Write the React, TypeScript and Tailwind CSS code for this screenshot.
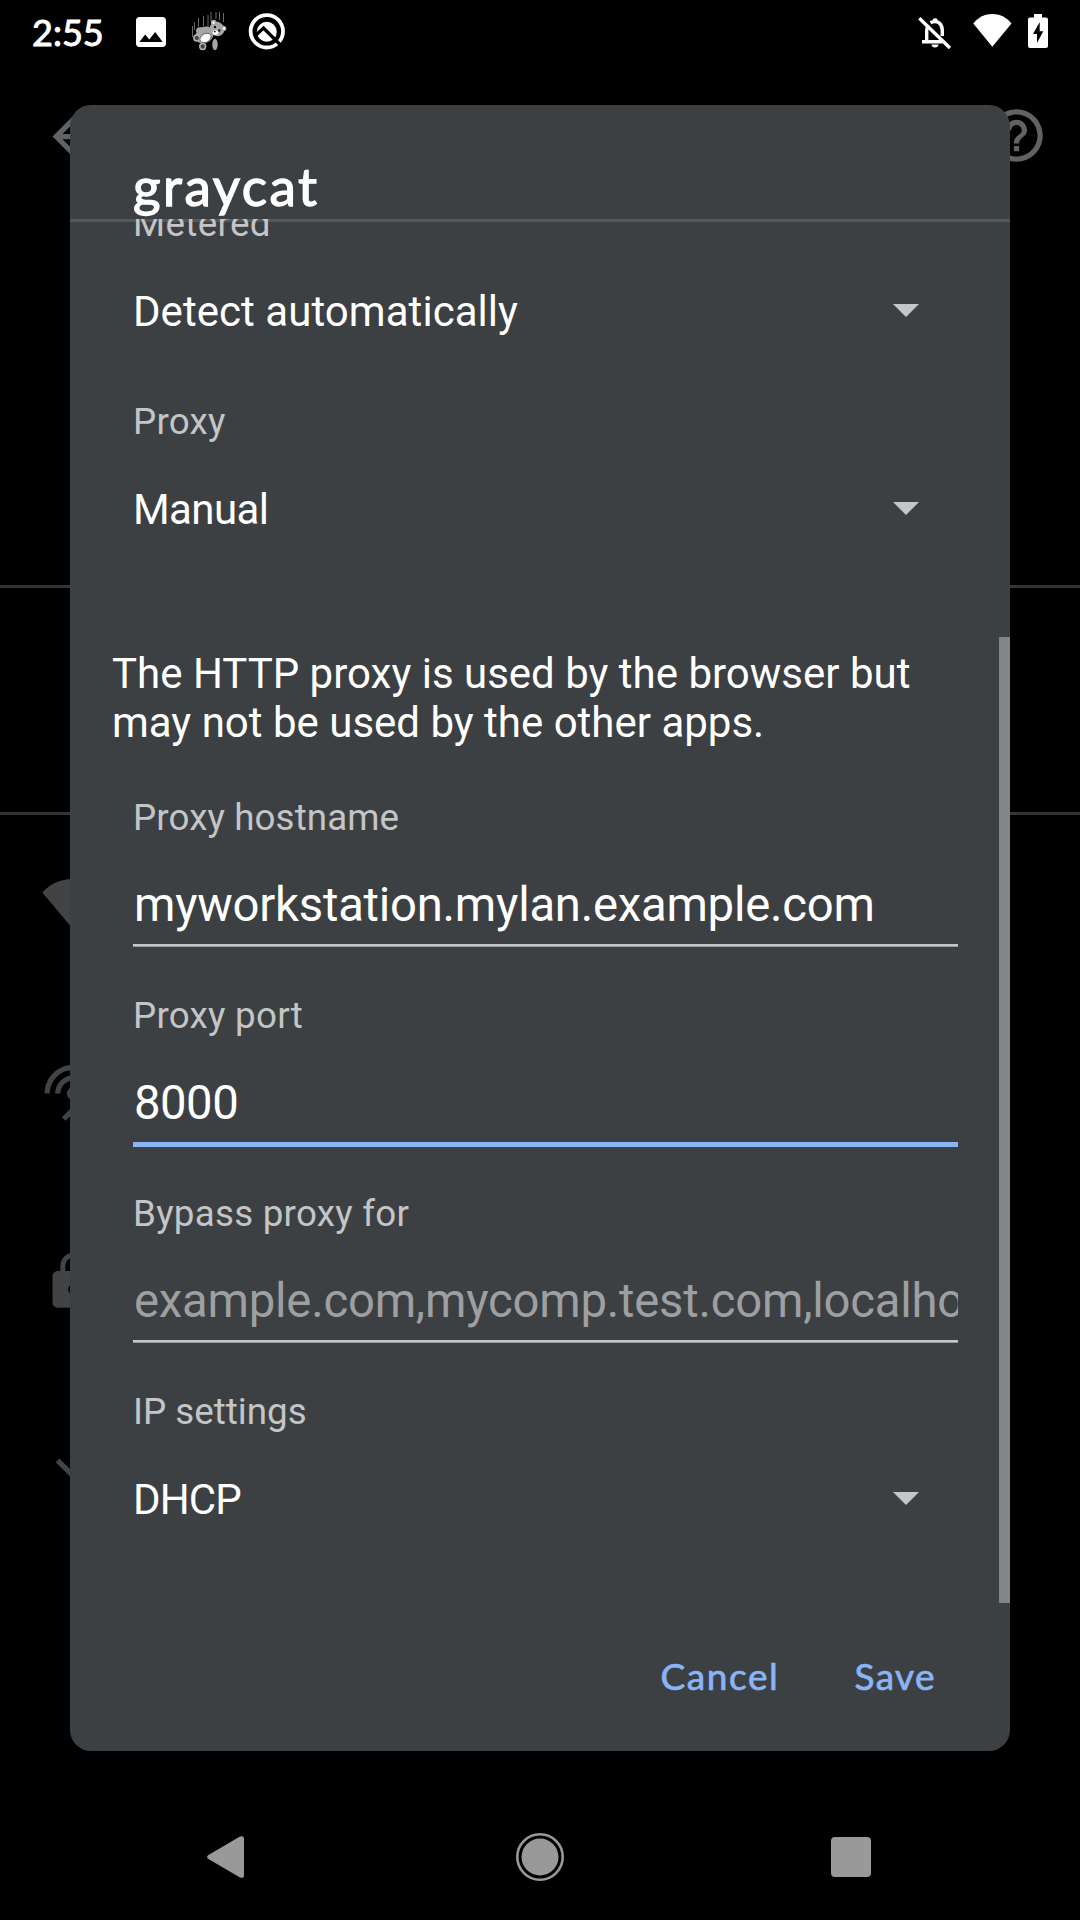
import type { ReactNode } from "react";

const BACK = "M20 11H7.83l5.59-5.59L12 4l-8 8 8 8 1.41-1.41L7.83 13H20v-2z";
const HELP =
  "M11 18h2v-2h-2v2zm1-16C6.48 2 2 6.48 2 12s4.48 10 10 10 10-4.48 10-10S17.52 2 12 2zm0 18c-4.41 0-8-3.59-8-8s3.59-8 8-8 8 3.59 8 8-3.59 8-8 8zm0-14c-2.21 0-4 1.79-4 4h2c0-1.1.9-2 2-2s2 .9 2 2c0 2-3 1.75-3 5h2c0-2.25 3-2.5 3-5 0-2.21-1.79-4-4-4z";
const WIFI = "M12 21.9L.5 8.2C3.4 4.9 7.5 3 12 3s8.600 1.900 11.500 5.200L12 21.900z";
const ANTENNA =
  "M12 5c-3.87 0-7 3.13-7 7h2c0-2.76 2.24-5 5-5s5 2.24 5 5h2c0-3.87-3.13-7-7-7zm1 9.29c.88-.39 1.5-1.26 1.5-2.29 0-1.38-1.12-2.5-2.5-2.5S9.500 10.620 9.500 12c0 1.020.620 1.900 1.500 2.290v3.300L7.590 21 9 22.410l3-3 3 3L16.410 21 13 17.590v-3.300zM12 1C5.930 1 1 5.930 1 12h2c0-4.970 4.030-9 9-9s9 4.030 9 9h2c0-6.070-4.930-11-11-11z";
const LOCK =
  "M18 8h-1V6c0-2.76-2.24-5-5-5S7 3.240 7 6v2H6c-1.100 0-2 .900-2 2v10c0 1.100.900 2 2 2h12c1.100 0 2-.900 2-2V10c0-1.100-.900-2-2-2zm-6 9c-1.100 0-2-.900-2-2s.900-2 2-2 2 .900 2 2-.900 2-2 2zm3.100-9H8.900V6c0-1.710 1.390-3.100 3.100-3.100s3.100 1.390 3.100 3.100v2z";
const EXPAND = "M16.590 8.590L12 13.170 7.410 8.590 6 10l6 6 6-6z";

function Glyph({ d, className }: { d: string; className: string }) {
  return (
    <svg viewBox="0 0 24 24" className={className} fill="currentColor">
      <path d={d} />
    </svg>
  );
}

function Bear() {
  return (
    <svg viewBox="0 0 40 42" className="ml-[19px] mt-[10px] h-[42px] w-[40px]">
      <g stroke="#6a6a6a" strokeWidth="1">
        <path d="M2.500 16v11M4.500 12v8M8.500 8v9M13.500 6v10M18 5v12M21 2v9M26 2v7M29.500 2v8M33.500 3v9" />
      </g>
      <g fill="#a6a6a6">
        <ellipse cx="14.500" cy="25" rx="9.500" ry="8" transform="rotate(-35 14.500 25)" />
        <ellipse cx="25" cy="34.500" rx="2.700" ry="5.800" />
        <ellipse cx="10.500" cy="20.500" rx="4.500" ry="3.200" />
        <circle cx="23.700" cy="12.500" r="2.800" />
        <circle cx="33.500" cy="18.500" r="2.800" />
        <ellipse cx="27" cy="19" rx="7.600" ry="7" transform="rotate(30 27 19)" />
      </g>
      <g fill="#444" stroke="#b5b5b5" strokeWidth="1.500">
        <circle cx="6.800" cy="28" r="2.900" />
        <circle cx="12.700" cy="36.500" r="2.900" />
      </g>
      <ellipse cx="15.500" cy="28" rx="6" ry="4.200" fill="#fff" stroke="#222" strokeWidth=".6" transform="rotate(-30 15.500 28)" />
      <ellipse cx="25.500" cy="22.500" rx="2.800" ry="2.300" fill="#fff" />
      <g fill="#111">
        <circle cx="25" cy="17" r="1.200" />
        <circle cx="29.200" cy="20.500" r="1.200" />
        <circle cx="24.800" cy="21.600" r=".9" />
      </g>
      <circle cx="23.500" cy="12.700" r="1.200" fill="#fff" />
      <circle cx="34" cy="18.500" r="1.200" fill="#fff" />
    </svg>
  );
}

function StatusBar() {
  return (
    <div className="flex h-[63px] items-start text-white">
      <div className="ml-[32px] mt-[10px] w-[72px] whitespace-nowrap font-['Lato'] text-[36px] font-normal leading-[44px] [-webkit-text-stroke:1px_#fff]">
        2:55
      </div>
      <Glyph
        className="ml-[27px] mt-[12px] size-[40px]"
        d="M21 19V5c0-1.100-.900-2-2-2H5c-1.100 0-2 .900-2 2v14c0 1.100.900 2 2 2h14c1.100 0 2-.900 2-2zM8.500 13.500l2.500 3.010L14.500 12l4.500 6H5l3.500-4.500z"
      />
      <Bear />
      <svg viewBox="0 0 40 40" className="ml-[17px] mt-[11px] size-[40px]">
        <circle cx="19.800" cy="20.300" r="16.200" fill="none" stroke="#fff" strokeWidth="3.800" />
        <circle cx="19.800" cy="20.800" r="10" fill="#fff" />
        <path d="M8.500 24.500L16.500 17L36 36.500" fill="none" stroke="#000" strokeWidth="3.300" />
      </svg>
      <div className="grow" />
      <svg viewBox="0 0 36 36" className="mt-[15px] size-[36px]" fill="none" stroke="#fff" strokeWidth="3.400">
        <path d="M5 26.700h20.500M9.700 26V15.500c0-2 .8-4 2-5.400M13.500 7.800C20 4 25.300 9 25.300 15v6" />
        <path d="M2.300 3.300L33 33" />
        <path d="M15.300 5.500a2.900 2.900 0 0 1 5.700 0zM14.500 29.500h7c0 4-7 4-7 0z" fill="#fff" stroke="none" />
      </svg>
      <svg viewBox="0 0 39 33" className="ml-[20px] mt-[14px] h-[33px] w-[39px]" fill="#fff">
        <path d="M19.300 32.700L.3 9.500C5.500 3 12 0 19.300 0s14 3 19.200 9.500z" />
      </svg>
      <svg viewBox="0 0 20 34" className="ml-[16px] mr-[32px] mt-[14px] h-[34px] w-[20px]">
        <path d="M6 0h8v3.500h4a2 2 0 0 1 2 2V32a2 2 0 0 1-2 2H2a2 2 0 0 1-2-2V5.500a2 2 0 0 1 2-2h4z" fill="#fff" />
        <path d="M11.700 8L5 20h4v9l6.300-11.700h-3.600z" fill="#000" />
      </svg>
    </div>
  );
}

function SettingsBackdrop() {
  return (
    <div className="flex grow flex-col">
      <div className="flex h-[522px] items-start justify-between pl-[42px] pr-[32px] pt-[41px] text-[#626262]">
        <Glyph d={BACK} className="mt-px size-[63px]" />
        <Glyph d={HELP} className="size-[63px]" />
      </div>
      <div className="h-[230px] border-y-[3px] border-[#333]" />
      <div className="flex flex-col pl-[41px] text-[#434343]">
        <Glyph d={WIFI} className="mt-[56px] size-[63px]" />
        <Glyph d={ANTENNA} className="ml-px mt-[128px] size-[63px]" />
        <Glyph d={LOCK} className="ml-px mt-[125px] size-[63px]" />
        <Glyph d={EXPAND} className="-ml-px mt-[123px] size-[63px]" />
      </div>
    </div>
  );
}

type FieldProps = { label: string; labelClass?: string; children: ReactNode };

function Field({ label, labelClass = "tracking-[0.25px]", children }: FieldProps) {
  return (
    <div className="flex h-[198px] flex-col pl-[63px] pr-[52px]">
      <div className={"text-[36.75px] leading-[43px] text-[#c4c5c6] " + labelClass}>{label}</div>
      {children}
    </div>
  );
}

type SelectProps = { label: string; value: string; labelClass?: string; valueClass?: string };

function Select({ label, value, labelClass, valueClass = "" }: SelectProps) {
  return (
    <Field label={label} labelClass={labelClass}>
      <div className="mt-[42px] flex h-[49px] items-start justify-between pr-[39px]">
        <span className={"text-[42px] leading-[49px] " + valueClass}>{value}</span>
        <svg viewBox="0 0 26 13" className="mt-[17px] h-[13px] w-[26px]" fill="#c5c6c7">
          <path d="M0 0h26L13 13z" />
        </svg>
      </div>
    </Field>
  );
}

type InputProps = SelectProps & { focused?: boolean };

function Input({ label, value, labelClass, valueClass = "", focused }: InputProps) {
  return (
    <Field label={label} labelClass={labelClass}>
      <div className={"mt-[39px] h-[55px] overflow-hidden whitespace-nowrap pl-px text-[47.25px] leading-[55px] " + valueClass}>
        {value}
      </div>
      {focused ? (
        <div className="mt-[11px] h-[5px] shrink-0 bg-[#8ab4f8]" />
      ) : (
        <div className="mt-[11px] h-[3px] shrink-0 border-b border-[#9a9c9d] bg-[#c5c6c7]" />
      )}
    </Field>
  );
}

function NetworkDialog() {
  return (
    <div className="absolute left-[70px] top-[105px] flex h-[1646px] w-[940px] flex-col overflow-hidden rounded-[21px] bg-[#3c4043] text-white">
      <h1 className="h-[114px] shrink-0 pl-[63px] pt-[49px] font-['Lato'] text-[53px] font-normal leading-[64px] tracking-[2.5px] [-webkit-text-stroke:1.3px_#fff]">
        graycat
      </h1>
      <div className="-mb-[3px] h-[3px] shrink-0 bg-[#54585b]" />
      <div className="relative h-[1384px] shrink-0 overflow-hidden">
        <div className="-mt-[17px]">
          <Select label="Metered" value="Detect automatically" labelClass="tracking-[0.35px]" valueClass="tracking-[0.05px]" />
          <Select label="Proxy" value="Manual" valueClass="tracking-[-0.6px]" />
          <p className="h-[198px] pl-[42px] pr-[60px] pt-[51px] text-[42px] leading-[49px]">
            The HTTP proxy is used by the browser but
            <br />
            may not be used by the other apps.
          </p>
          <Input
            label="Proxy hostname"
            labelClass="tracking-[0.1px]"
            value="myworkstation.mylan.example.com"
            valueClass="text-white tracking-[-0.24px]"
          />
          <Input label="Proxy port" value="8000" valueClass="text-white tracking-[-0.5px]" focused />
          <Input
            label="Bypass proxy for"
            value="example.com,mycomp.test.com,localhost"
            valueClass="text-[#9e9fa1] tracking-[-0.22px]"
          />
          <Select label="IP settings" labelClass="tracking-normal" value="DHCP" valueClass="tracking-[-0.9px]" />
        </div>
        <div className="absolute bottom-0 right-0 h-[966px] w-[11px] bg-[#828689]" />
      </div>
      <div className="flex justify-end gap-[75px] pr-[74px] pt-[50px] font-['Lato'] text-[37px] font-normal leading-[46px] text-[#8ab4f8] [-webkit-text-stroke:0.7px_#8ab4f8]">
        <span className="tracking-[1.6px]">Cancel</span>
        <span className="tracking-[1.4px]">Save</span>
      </div>
    </div>
  );
}

function NavBar() {
  return (
    <div className="flex h-[126px] items-center pl-[207px] pr-[209px]">
      <svg viewBox="0 0 37 42" className="h-[42px] w-[37px]" fill="#999">
        <path d="M1 19.200L33 .6Q37-1 37 3v36q0 4-4 2.400L1 22.800q-1.800-1.800 0-3.600z" />
      </svg>
      <svg viewBox="0 0 48 48" className="ml-[272px] size-[48px]">
        <circle cx="24" cy="24" r="22.700" fill="none" stroke="#999" strokeWidth="2.600" />
        <circle cx="24" cy="24" r="18.500" fill="#999" />
      </svg>
      <div className="ml-auto size-[40px] rounded-[4px] bg-[#999]" />
    </div>
  );
}

export default function App() {
  return (
    <div className="relative flex h-[1920px] w-[1080px] flex-col overflow-hidden bg-black font-['Roboto',sans-serif]">
      <StatusBar />
      <SettingsBackdrop />
      <NavBar />
      <NetworkDialog />
    </div>
  );
}
